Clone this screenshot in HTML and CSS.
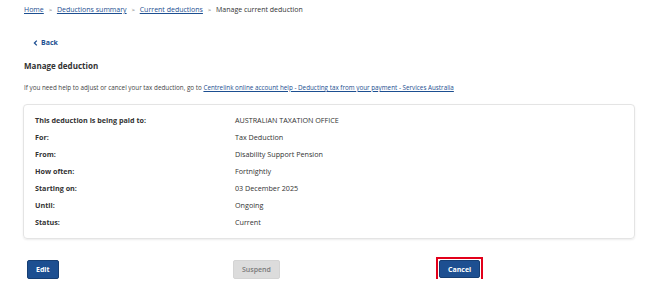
FILE: index.html
```html
<!DOCTYPE html>
<html lang="en">
<head>
    <meta charset="UTF-8">
    <meta name="viewport" content="width=device-width, initial-scale=1.0">
    <title>Manage current deduction</title>
    <link rel="stylesheet" href="styles.css">
</head>
<body>
    <div class="page">
        <nav class="breadcrumb">
            <a href="#">Home</a>
            <span class="sep">&gt;</span>
            <a href="#">Deductions summary</a>
            <span class="sep">&gt;</span>
            <a href="#">Current deductions</a>
            <span class="sep">&gt;</span>
            <span class="current">Manage current deduction</span>
        </nav>

        <a href="#" class="back">
            <svg width="5" height="6" viewBox="0 0 5 6"><path d="M3.8 0.6 L1.4 3 L3.8 5.4" fill="none" stroke="#1d4f91" stroke-width="1.3"/></svg>
            Back
        </a>

        <h1>Manage deduction</h1>

        <p class="help">If you need help to adjust or cancel your tax deduction, go to <a href="#">Centrelink online account help - Deducting tax from your payment - Services Australia</a></p>

        <div class="card">
            <div class="row"><span class="label">This deduction is being paid to:</span><span class="value">AUSTRALIAN TAXATION OFFICE</span></div>
            <div class="row"><span class="label">For:</span><span class="value">Tax Deduction</span></div>
            <div class="row"><span class="label">From:</span><span class="value">Disability Support Pension</span></div>
            <div class="row"><span class="label">How often:</span><span class="value">Fortnightly</span></div>
            <div class="row"><span class="label">Starting on:</span><span class="value">03 December 2025</span></div>
            <div class="row"><span class="label">Until:</span><span class="value">Ongoing</span></div>
            <div class="row"><span class="label">Status:</span><span class="value">Current</span></div>
        </div>

        <div class="actions">
            <div><button class="btn">Edit</button></div>
            <div><button class="btn disabled" disabled>Suspend</button></div>
            <div><span class="focus-ring"><button class="btn">Cancel</button></span></div>
        </div>
    </div>
</body>
</html>
```

FILE: styles.css
```css
body {
    margin: 0;
    font-family: 'Open Sans', sans-serif;
    color: #333;
    background: #fff;
}
.page {
    padding: 4px 17px 0 23px;
}
a {
    color: #1d4f91;
}
.breadcrumb {
    font-size: 7px;
    line-height: 12px;
    margin-left: 1px;
}
.breadcrumb .sep {
    margin: 0 3px;
    color: #555;
    font-size: 6px;
}
.back {
    display: inline-flex;
    align-items: center;
    gap: 3px;
    margin: 22px 0 0 10px;
    font-size: 7px;
    font-weight: 700;
    text-decoration: none;
    line-height: 10px;
}
h1 {
    font-size: 8px;
    font-weight: 700;
    margin: 9px 0 0 1px;
    line-height: 12px;
}
.help {
    font-size: 6.3px;
    margin: 12px 0 0 1px;
    line-height: 8px;
    color: #444;
}
.card {
    margin-top: 12px;
    border: 1px solid #e4e4e4;
    border-radius: 4px;
    box-shadow: 0 1px 2px rgba(0, 0, 0, 0.08);
    padding: 7px 12px 7px 11px;
    width: 587px;
}
.row {
    display: grid;
    grid-template-columns: 200px 1fr;
    font-size: 7.2px;
    line-height: 17px;
}
.label {
    font-weight: 700;
}
.actions {
    display: grid;
    grid-template-columns: 206px 206px 206px;
    align-items: start;
    margin: 21px 0 0 4px;
}
.actions > div {
    display: flex;
}
.btn {
    display: block;
    font-family: 'Open Sans', sans-serif;
    font-size: 7px;
    font-weight: 700;
    color: #fff;
    background: #1d4f91;
    border: 1px solid #163e73;
    border-radius: 2px;
    height: 19px;
    padding: 0 8px;
    cursor: pointer;
}
.btn.disabled {
    background: #dcdcdc;
    border-color: #d4d4d4;
    color: #7a7a7a;
    font-weight: 600;
    padding: 0 8px;
    cursor: default;
}
.focus-ring {
    display: block;
    outline: 2px solid #e2001a;
    outline-offset: 1px;
}
.focus-ring .btn {
    height: 18px;
}
```
